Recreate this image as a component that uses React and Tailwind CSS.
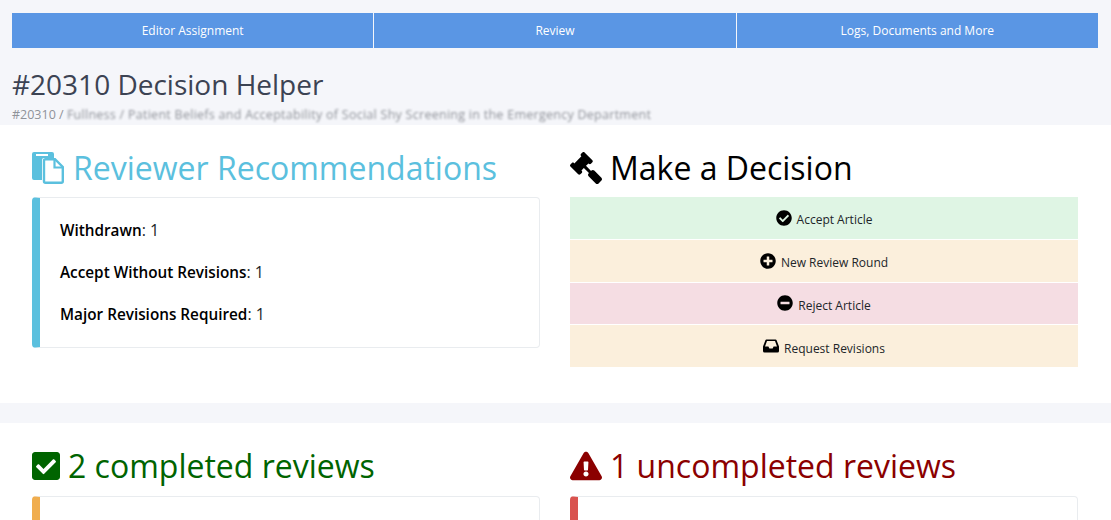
import React from 'react';
import { FaCheckCircle, FaPlusCircle, FaMinusCircle, FaGavel, FaCheckSquare, FaExclamationTriangle } from 'react-icons/fa';

const FONT = "font-['Open_Sans',sans-serif]";

function FilesIcon() {
  return (
    <svg width="32" height="32" viewBox="0 0 32 32" className="shrink-0">
      <path d="M2 0h18a2 2 0 0 1 2 2v4H12a2 2 0 0 0-2 2v20H2a2 2 0 0 1-2-2V2a2 2 0 0 1 2-2z" fill="#5bc0de" />
      <rect x="4" y="2" width="12" height="2" fill="#fff" />
      <path d="M13.5 7.2h9.5l7.8 7.8v14.3a1.5 1.5 0 0 1-1.5 1.5H13.5a1.5 1.5 0 0 1-1.5-1.5V8.7a1.5 1.5 0 0 1 1.5-1.5z" fill="#fff" stroke="#5bc0de" strokeWidth="2.4" />
      <path d="M22.5 7.5v8h8" fill="none" stroke="#5bc0de" strokeWidth="2.2" />
    </svg>
  );
}

function InboxIcon({ className = '' }) {
  return (
    <svg width="16" height="16" viewBox="0 0 16 16" className={className}>
      <path
        fillRule="evenodd"
        fill="#000"
        d="M3.4 1.5h9.2a1 1 0 0 1 .9.6L16 8.5v4.4a1.5 1.5 0 0 1-1.5 1.5h-13A1.5 1.5 0 0 1 0 12.9V8.5l2.5-6.4a1 1 0 0 1 .9-.6zM4 3 2 8.4h3.4l1 2h3.2l1-2H14L12 3z"
      />
    </svg>
  );
}

function TopTab({ children }) {
  return <div className="flex-1 flex items-center justify-center text-xs text-white bg-[#5a96e4]">{children}</div>;
}

function Decision({ Icon, label, bg }) {
  return (
    <div className={`h-[41.75px] flex items-center justify-center gap-[5px] text-xs text-[#212529] ${bg}`}>
      <Icon className="text-black text-base shrink-0" />
      <span className="mt-[5px]">{label}</span>
    </div>
  );
}

function Item({ label, value }) {
  return <p className="text-base leading-[21px] text-[#212529] mb-[21px] last:mb-0"><span className="text-[15.3px] font-semibold text-black">{label}</span>: {value}</p>;
}

function Card({ color, className = '', children }) {
  return <div className={`rounded border border-[#e9ecef] border-l-8 ${color} ${className}`}>{children}</div>;
}

export default function App() {
  return (
    <div className={`${FONT} w-[1111px] h-[520px] overflow-hidden bg-[#f5f6fa]`}>
      <div className="pl-3 pr-[13px] pt-[13px]">
        <div className="flex h-[35px] gap-px">
          <TopTab>Editor Assignment</TopTab>
          <TopTab>Review</TopTab>
          <TopTab>Logs, Documents and More</TopTab>
        </div>
        <h1 className="mt-[18px] text-[28px] leading-[36px] font-normal text-[#3c4353]">#20310 Decision Helper</h1>
        <div className="mt-[4px] text-[12.5px] leading-[18px] text-[#8f9299] whitespace-nowrap flex">
          <span>#20310 /&nbsp;</span>
          <span className="blur-[1.2px] tracking-[0.27px]">Fullness / Patient Beliefs and Acceptability of Social Shy Screening in the Emergency Department</span>
        </div>
      </div>
      <div className="mt-[1px] bg-white h-[278px] flex gap-[30px] px-8 pt-[25px]">
        <section className="w-[508px]">
          <h2 className="flex items-center gap-[9px] text-[32px] leading-[36px] text-[#5bc0de]"><FilesIcon />Reviewer Recommendations</h2>
          <Card color="border-l-[#5bc0de]" className="mt-[11px] h-[151px] px-5 py-[22px]">
            <Item label="Withdrawn" value="1" />
            <Item label="Accept Without Revisions" value="1" />
            <Item label="Major Revisions Required" value="1" />
          </Card>
        </section>
        <section className="w-[508px]">
          <h2 className="flex items-center gap-2 text-[32px] leading-[36px] text-black"><FaGavel className="text-[32px] -scale-x-100 shrink-0" />Make a Decision</h2>
          <div className="mt-[11px] flex flex-col gap-px">
            <Decision Icon={FaCheckCircle} label="Accept Article" bg="bg-[#dff5e4]" />
            <Decision Icon={FaPlusCircle} label="New Review Round" bg="bg-[#fbefdc]" />
            <Decision Icon={FaMinusCircle} label="Reject Article" bg="bg-[#f5dde3]" />
            <Decision Icon={InboxIcon} label="Request Revisions" bg="bg-[#fbefdc]" />
          </div>
        </section>
      </div>
      <div className="mt-5 bg-white h-[100px] flex gap-[30px] px-8 pt-[25px]">
        <section className="w-[508px]">
          <h2 className="flex items-center gap-2 text-[32px] leading-[36px] text-[#006400]"><FaCheckSquare className="w-7 h-8 shrink-0" />2 completed reviews</h2>
          <Card color="border-l-[#f0ad4e]" className="mt-3 h-[60px]" />
        </section>
        <section className="w-[508px]">
          <h2 className="flex items-center gap-2 text-[32px] leading-[36px] text-[#8b0000]"><FaExclamationTriangle className="text-[32px] shrink-0" />1 uncompleted reviews</h2>
          <Card color="border-l-[#d9534f]" className="mt-3 h-[60px]" />
        </section>
      </div>
    </div>
  );
}
